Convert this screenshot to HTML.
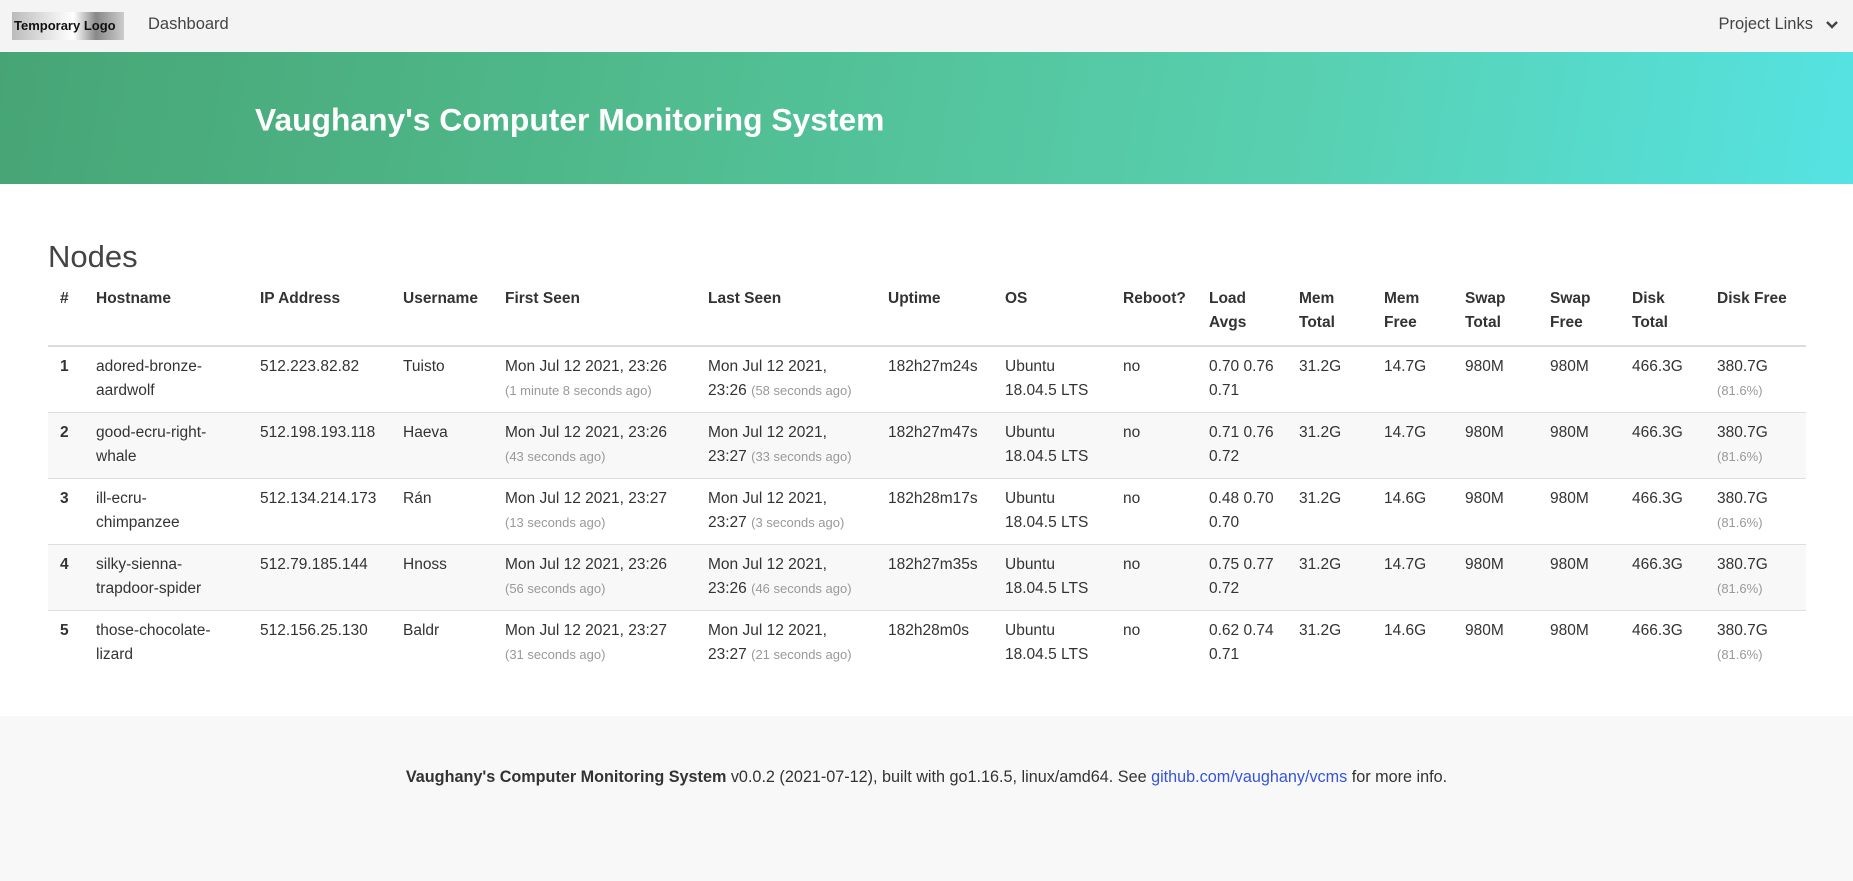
<!DOCTYPE html>
<html><head><meta charset="utf-8"><style>
*{box-sizing:border-box;margin:0;padding:0}
body{width:1853px;height:881px;overflow:hidden;font-family:"Liberation Sans",sans-serif;color:#333;background:#fff;font-size:16px}
.nav{height:52px;background:#f4f4f4;position:relative}
.logo{position:absolute;left:12px;top:12px;width:112px;height:28px;background:linear-gradient(90deg,#bbb 0%,#eee 40%,#fff 55%,#888 75%,#ccc 100%);font-weight:bold;font-size:13px;color:#111;line-height:28px;padding-left:2px;white-space:nowrap;overflow:hidden}
.dash{position:absolute;left:148px;top:15px;font-size:16.5px;color:#444}
.pl{position:absolute;right:40px;top:15px;font-size:16.5px;color:#444}
.chev{position:absolute;right:14px;top:20px}
.banner{height:132px;background:linear-gradient(100deg,#47a575 0%,#50bb8e 35%,#58d0b0 70%,#55e3e3 100%);position:relative}
.banner h1{position:absolute;left:255px;top:68px;transform:translateY(-50%);color:#fff;font-size:31.8px;font-weight:bold}
h2{position:absolute;left:48px;top:239px;font-size:31px;font-weight:normal;color:#444}
table{position:absolute;left:48px;top:279px;width:1758px;border-collapse:collapse;table-layout:fixed;font-size:15.5px;line-height:24px}
th{text-align:left;font-weight:bold;padding:8px 6px 10px 12px;border-bottom:2px solid #dcdcdc;vertical-align:top;height:66px}
td{padding:8px 6px 9px 12px;border-top:1px solid #dedede;vertical-align:top;height:65px;white-space:nowrap}
tbody tr:nth-child(even){background:#f8f8f8}
td:first-child{font-weight:bold}
small{color:#999;font-size:13px}
.foot{position:absolute;left:0;top:716px;width:1853px;height:165px;background:#f8f8f8;text-align:center;padding-top:52px;font-size:16.2px;color:#333}
.foot a{color:#3455db;text-decoration:none}
</style></head><body>
<div class="nav"><div class="logo">Temporary Logo</div><div class="dash">Dashboard</div><div class="pl">Project Links</div>
<svg class="chev" width="14" height="10" viewBox="0 0 14 10"><path d="M2 2l5 5 5-5" stroke="#444" stroke-width="2.4" fill="none"/></svg></div>
<div class="banner"><h1>Vaughany's Computer Monitoring System</h1></div>
<h2>Nodes</h2>
<table>
<colgroup><col style="width:36px"><col style="width:164px"><col style="width:143px"><col style="width:102px"><col style="width:203px"><col style="width:180px"><col style="width:117px"><col style="width:118px"><col style="width:86px"><col style="width:90px"><col style="width:85px"><col style="width:81px"><col style="width:85px"><col style="width:82px"><col style="width:85px"><col style="width:101px"></colgroup>
<thead><tr><th>#</th><th>Hostname</th><th>IP Address</th><th>Username</th><th>First Seen</th><th>Last Seen</th><th>Uptime</th><th>OS</th><th>Reboot?</th><th>Load<br>Avgs</th><th>Mem<br>Total</th><th>Mem<br>Free</th><th>Swap<br>Total</th><th>Swap<br>Free</th><th>Disk<br>Total</th><th>Disk Free</th></tr></thead>
<tbody>
<tr><td>1</td><td>adored-bronze-<br>aardwolf</td><td>512.223.82.82</td><td>Tuisto</td><td>Mon Jul 12 2021, 23:26<br><small>(1 minute 8 seconds ago)</small></td><td>Mon Jul 12 2021,<br>23:26 <small>(58 seconds ago)</small></td><td>182h27m24s</td><td>Ubuntu<br>18.04.5 LTS</td><td>no</td><td>0.70 0.76<br>0.71</td><td>31.2G</td><td>14.7G</td><td>980M</td><td>980M</td><td>466.3G</td><td>380.7G<br><small>(81.6%)</small></td></tr>
<tr><td>2</td><td>good-ecru-right-<br>whale</td><td>512.198.193.118</td><td>Haeva</td><td>Mon Jul 12 2021, 23:26<br><small>(43 seconds ago)</small></td><td>Mon Jul 12 2021,<br>23:27 <small>(33 seconds ago)</small></td><td>182h27m47s</td><td>Ubuntu<br>18.04.5 LTS</td><td>no</td><td>0.71 0.76<br>0.72</td><td>31.2G</td><td>14.7G</td><td>980M</td><td>980M</td><td>466.3G</td><td>380.7G<br><small>(81.6%)</small></td></tr>
<tr><td>3</td><td>ill-ecru-<br>chimpanzee</td><td>512.134.214.173</td><td>Rán</td><td>Mon Jul 12 2021, 23:27<br><small>(13 seconds ago)</small></td><td>Mon Jul 12 2021,<br>23:27 <small>(3 seconds ago)</small></td><td>182h28m17s</td><td>Ubuntu<br>18.04.5 LTS</td><td>no</td><td>0.48 0.70<br>0.70</td><td>31.2G</td><td>14.6G</td><td>980M</td><td>980M</td><td>466.3G</td><td>380.7G<br><small>(81.6%)</small></td></tr>
<tr><td>4</td><td>silky-sienna-<br>trapdoor-spider</td><td>512.79.185.144</td><td>Hnoss</td><td>Mon Jul 12 2021, 23:26<br><small>(56 seconds ago)</small></td><td>Mon Jul 12 2021,<br>23:26 <small>(46 seconds ago)</small></td><td>182h27m35s</td><td>Ubuntu<br>18.04.5 LTS</td><td>no</td><td>0.75 0.77<br>0.72</td><td>31.2G</td><td>14.7G</td><td>980M</td><td>980M</td><td>466.3G</td><td>380.7G<br><small>(81.6%)</small></td></tr>
<tr><td>5</td><td>those-chocolate-<br>lizard</td><td>512.156.25.130</td><td>Baldr</td><td>Mon Jul 12 2021, 23:27<br><small>(31 seconds ago)</small></td><td>Mon Jul 12 2021,<br>23:27 <small>(21 seconds ago)</small></td><td>182h28m0s</td><td>Ubuntu<br>18.04.5 LTS</td><td>no</td><td>0.62 0.74<br>0.71</td><td>31.2G</td><td>14.6G</td><td>980M</td><td>980M</td><td>466.3G</td><td>380.7G<br><small>(81.6%)</small></td></tr>
</tbody></table>
<div class="foot"><b>Vaughany's Computer Monitoring System</b> v0.0.2 (2021-07-12), built with go1.16.5, linux/amd64. See <a>github.com/vaughany/vcms</a> for more info.</div>
</body></html>
